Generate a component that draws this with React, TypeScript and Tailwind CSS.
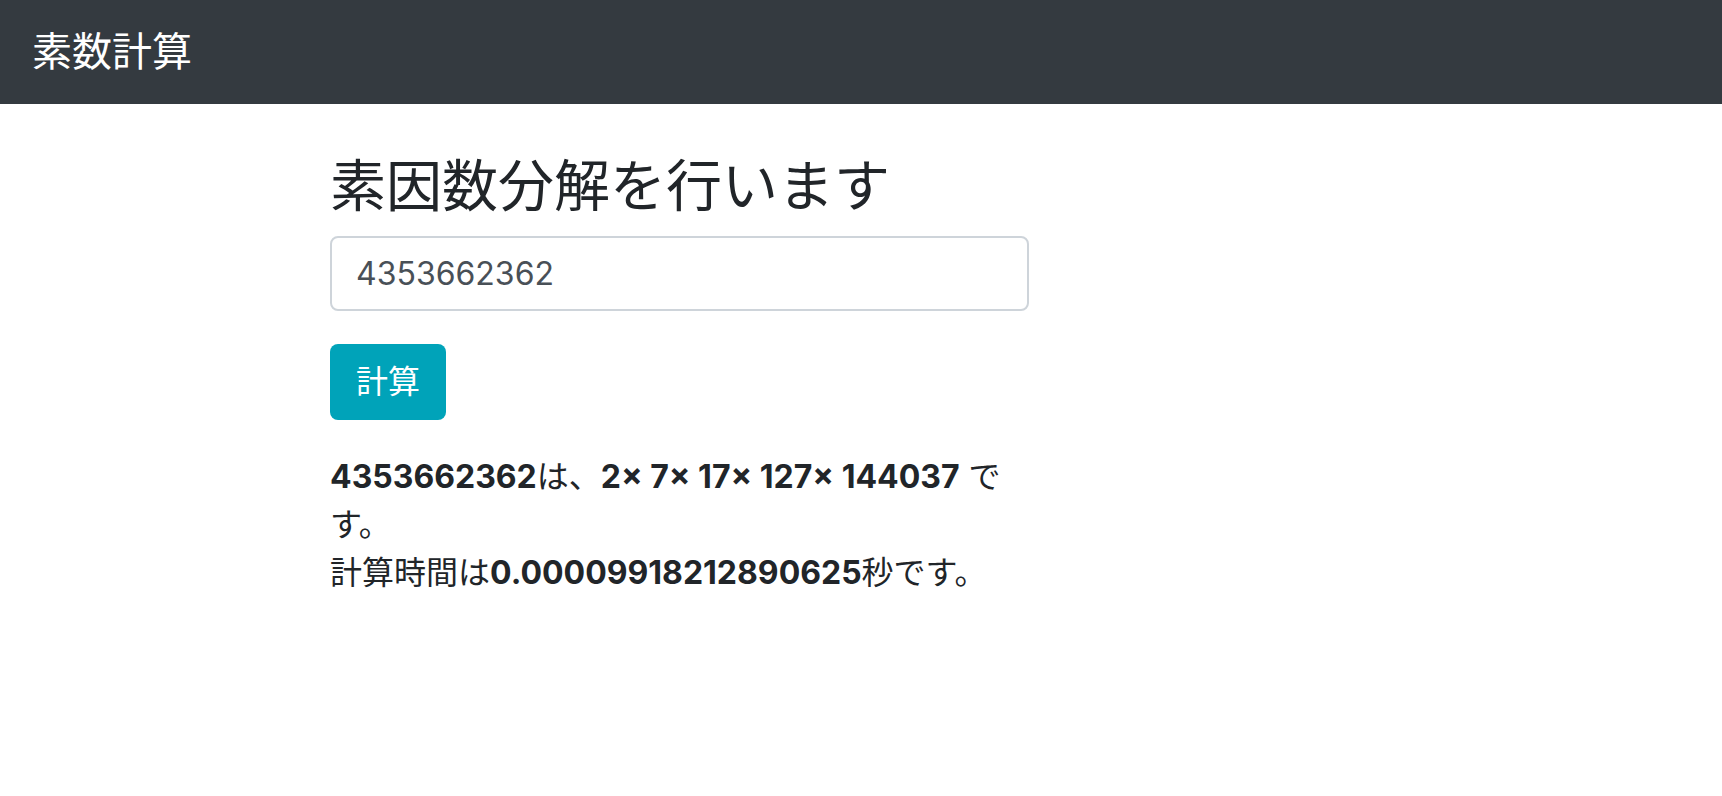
import { useState } from "react";

const font = { fontFamily: 'Inter, "Noto Sans CJK JP", sans-serif' };

export default function App() {
  const [value, setValue] = useState("4353662362");

  return (
    <div className="min-h-screen bg-white text-[#212529]" style={font}>
      <nav className="h-[104px] bg-[#343a40] flex items-center pl-[32px]">
        <span className="text-[40px] leading-none text-white">素数計算</span>
      </nav>
      <main className="ml-[330px] w-[699px] pt-[49px]">
        <h3 className="text-[56px] leading-[1.2] font-normal mb-[16px]">素因数分解を行います</h3>
        <input
          className="block w-full h-[75px] border-2 border-[#ced4da] rounded-[8px] px-[24px] text-[32px] text-[#495057] outline-none"
          value={value}
          onChange={(e) => setValue(e.target.value)}
        />
        <button className="mt-[33px] h-[76px] px-[26px] rounded-[8px] bg-[#00a3b9] text-white text-[32px] leading-none">
          計算
        </button>
        <div className="mt-[33px] text-[32px] leading-[48px]">
          <div>
            <b>4353662362</b>は、<b>2× 7× 17× 127× 144037</b> です。
          </div>
          <div>
            計算時間は<b>0.00009918212890625</b>秒です。
          </div>
        </div>
      </main>
    </div>
  );
}
